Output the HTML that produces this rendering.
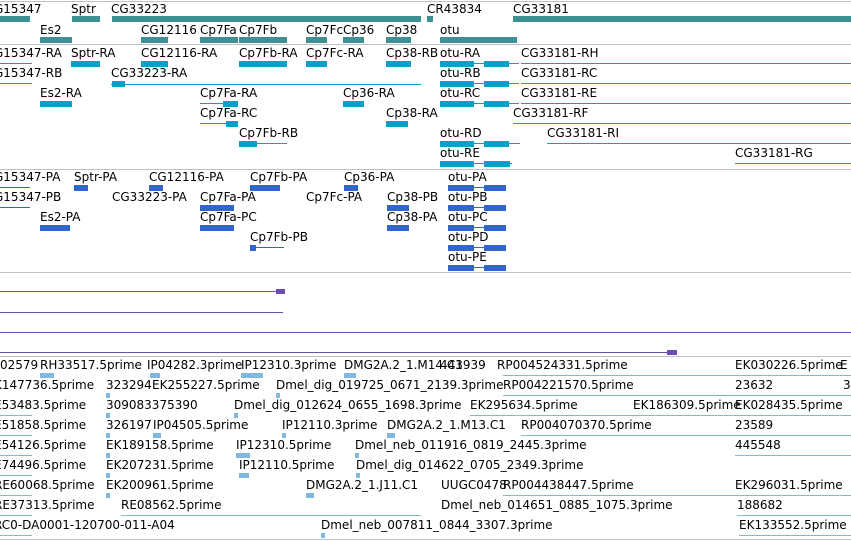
<!DOCTYPE html>
<html><head><meta charset="utf-8"><style>
body{margin:0;width:851px;height:541px;overflow:hidden;background:#fff;position:relative;font-family:"DejaVu Sans","Liberation Sans",sans-serif;font-size:12px;color:#000}
span{position:absolute;white-space:nowrap;line-height:14px}
i{position:absolute;display:block}
.s{left:0;width:851px;height:1px;background:#c0c0c0}
.g{background:#3f9093;height:6px}
.t{background:#0aa0c8;height:6px}
.tl{background:#0aa0c8;height:1px}
.p{background:#3366cc;height:6px}
.pl{background:#3366cc;height:1px}
.v{background:#6a4fb0;height:1px}
.e{background:#80b8e0;height:5px}
.el{background:#80b8e0;height:1px}
</style></head><body>
<i class="s" style="top:1px"></i><i class="s" style="top:44px"></i><i class="s" style="top:169px"></i><i class="s" style="top:272px"></i><i class="s" style="top:356px"></i><i class="s" style="top:539px"></i>

<!-- genes -->
<span style="left:-6px;top:2px">G15347</span><span style="left:71px;top:2px">Sptr</span><span style="left:111px;top:2px">CG33223</span><span style="left:427px;top:2px">CR43834</span><span style="left:513px;top:2px">CG33181</span>
<i class="g" style="left:0;top:16px;width:30px"></i><i class="g" style="left:72px;top:16px;width:28px"></i><i class="g" style="left:112px;top:16px;width:309px"></i><i class="g" style="left:427px;top:16px;width:6px"></i><i class="g" style="left:513px;top:16px;width:338px"></i>
<span style="left:40px;top:23px">Es2</span><span style="left:141px;top:23px">CG12116</span><span style="left:200px;top:23px">Cp7Fa</span><span style="left:239px;top:23px">Cp7Fb</span><span style="left:306px;top:23px">Cp7Fc</span><span style="left:343px;top:23px">Cp36</span><span style="left:386px;top:23px">Cp38</span><span style="left:440px;top:23px">otu</span>
<i class="g" style="left:40px;top:37px;width:32px"></i><i class="g" style="left:141px;top:37px;width:27px"></i><i class="g" style="left:200px;top:37px;width:38px"></i><i class="g" style="left:239px;top:37px;width:48px"></i><i class="g" style="left:306px;top:37px;width:21px"></i><i class="g" style="left:343px;top:37px;width:21px"></i><i class="g" style="left:386px;top:37px;width:25px"></i><i class="g" style="left:440px;top:37px;width:77px"></i>

<!-- transcripts -->
<span style="left:-6px;top:46px">G15347-RA</span><span style="left:71px;top:46px">Sptr-RA</span><span style="left:141px;top:46px">CG12116-RA</span><span style="left:239px;top:46px">Cp7Fb-RA</span><span style="left:306px;top:46px">Cp7Fc-RA</span><span style="left:386px;top:46px">Cp38-RB</span><span style="left:440px;top:46px">otu-RA</span><span style="left:521px;top:46px">CG33181-RH</span>
<i class="tl" style="left:0;top:63px;width:32px"></i><i class="t" style="left:71px;top:61px;width:29px"></i><i class="t" style="left:141px;top:61px;width:27px"></i><i class="t" style="left:239px;top:61px;width:48px"></i><i class="t" style="left:306px;top:61px;width:21px"></i><i class="t" style="left:386px;top:61px;width:25px"></i><i class="t" style="left:440px;top:61px;width:34px"></i><i class="tl" style="left:474px;top:63px;width:45px"></i><i class="t" style="left:484px;top:61px;width:25px"></i><i class="tl" style="left:521px;top:63px;width:330px"></i>
<span style="left:-6px;top:66px">G15347-RB</span><span style="left:111px;top:66px">CG33223-RA</span><span style="left:440px;top:66px">otu-RB</span><span style="left:521px;top:66px">CG33181-RC</span>
<i class="tl" style="left:0;top:83px;width:32px"></i><i class="tl" style="left:111px;top:84px;width:310px"></i><i class="t" style="left:112px;top:81px;width:13px"></i><i class="t" style="left:440px;top:81px;width:34px"></i><i class="tl" style="left:474px;top:83px;width:45px"></i><i class="t" style="left:484px;top:81px;width:25px"></i><i class="tl" style="left:521px;top:83px;width:330px"></i>
<span style="left:40px;top:86px">Es2-RA</span><span style="left:200px;top:86px">Cp7Fa-RA</span><span style="left:343px;top:86px">Cp36-RA</span><span style="left:440px;top:86px">otu-RC</span><span style="left:521px;top:86px">CG33181-RE</span>
<i class="t" style="left:40px;top:101px;width:32px"></i><i class="tl" style="left:200px;top:103px;width:38px"></i><i class="t" style="left:223px;top:101px;width:15px"></i><i class="t" style="left:343px;top:101px;width:21px"></i><i class="t" style="left:440px;top:101px;width:34px"></i><i class="tl" style="left:474px;top:103px;width:45px"></i><i class="t" style="left:484px;top:101px;width:25px"></i><i class="tl" style="left:521px;top:103px;width:330px"></i>
<span style="left:200px;top:106px">Cp7Fa-RC</span><span style="left:386px;top:106px">Cp38-RA</span><span style="left:513px;top:106px">CG33181-RF</span>
<i class="tl" style="left:200px;top:123px;width:38px"></i><i class="t" style="left:226px;top:121px;width:12px"></i><i class="t" style="left:386px;top:121px;width:22px"></i><i class="tl" style="left:513px;top:123px;width:338px"></i>
<span style="left:239px;top:126px">Cp7Fb-RB</span><span style="left:440px;top:126px">otu-RD</span><span style="left:547px;top:126px">CG33181-RI</span>
<i class="t" style="left:239px;top:141px;width:18px"></i><i class="tl" style="left:257px;top:143px;width:30px"></i><i class="t" style="left:440px;top:141px;width:34px"></i><i class="tl" style="left:474px;top:143px;width:46px"></i><i class="t" style="left:484px;top:141px;width:25px"></i><i class="tl" style="left:547px;top:143px;width:304px"></i>
<span style="left:440px;top:146px">otu-RE</span><span style="left:735px;top:146px">CG33181-RG</span>
<i class="t" style="left:440px;top:161px;width:34px"></i><i class="tl" style="left:474px;top:163px;width:38px"></i><i class="t" style="left:484px;top:161px;width:26px"></i><i class="tl" style="left:735px;top:163px;width:116px"></i>

<!-- proteins -->
<span style="left:-6px;top:170px">G15347-PA</span><span style="left:74px;top:170px">Sptr-PA</span><span style="left:149px;top:170px">CG12116-PA</span><span style="left:250px;top:170px">Cp7Fb-PA</span><span style="left:344px;top:170px">Cp36-PA</span><span style="left:448px;top:170px">otu-PA</span>
<i class="pl" style="left:0;top:187px;width:30px"></i><i class="p" style="left:74px;top:185px;width:14px"></i><i class="p" style="left:149px;top:185px;width:14px"></i><i class="p" style="left:250px;top:185px;width:30px"></i><i class="p" style="left:344px;top:185px;width:14px"></i><i class="p" style="left:448px;top:185px;width:26px"></i><i class="pl" style="left:474px;top:187px;width:32px"></i><i class="p" style="left:484px;top:185px;width:22px"></i>
<span style="left:-6px;top:190px">G15347-PB</span><span style="left:112px;top:190px">CG33223-PA</span><span style="left:200px;top:190px">Cp7Fa-PA</span><span style="left:306px;top:190px">Cp7Fc-PA</span><span style="left:387px;top:190px">Cp38-PB</span><span style="left:448px;top:190px">otu-PB</span>
<i class="pl" style="left:0;top:207px;width:30px"></i><i class="p" style="left:200px;top:205px;width:34px"></i><i class="p" style="left:387px;top:205px;width:22px"></i><i class="p" style="left:448px;top:205px;width:26px"></i><i class="pl" style="left:474px;top:207px;width:32px"></i><i class="p" style="left:484px;top:205px;width:22px"></i>
<span style="left:40px;top:210px">Es2-PA</span><span style="left:200px;top:210px">Cp7Fa-PC</span><span style="left:387px;top:210px">Cp38-PA</span><span style="left:448px;top:210px">otu-PC</span>
<i class="p" style="left:40px;top:225px;width:30px"></i><i class="p" style="left:200px;top:225px;width:34px"></i><i class="p" style="left:387px;top:225px;width:22px"></i><i class="p" style="left:448px;top:225px;width:26px"></i><i class="pl" style="left:474px;top:227px;width:32px"></i><i class="p" style="left:484px;top:225px;width:22px"></i>
<span style="left:250px;top:230px">Cp7Fb-PB</span><span style="left:448px;top:230px">otu-PD</span>
<i class="pl" style="left:250px;top:247px;width:34px"></i><i class="p" style="left:250px;top:245px;width:6px"></i><i class="p" style="left:448px;top:245px;width:26px"></i><i class="pl" style="left:474px;top:247px;width:32px"></i><i class="p" style="left:484px;top:245px;width:22px"></i>
<span style="left:448px;top:250px">otu-PE</span>
<i class="p" style="left:448px;top:265px;width:26px"></i><i class="pl" style="left:474px;top:267px;width:32px"></i><i class="p" style="left:484px;top:265px;width:22px"></i>

<!-- purple -->
<i class="v" style="left:0;top:291px;width:285px"></i><i class="v" style="left:276px;top:289px;width:9px;height:5px"></i>
<i class="v" style="left:0;top:312px;width:283px"></i>
<i class="v" style="left:0;top:332px;width:851px"></i>
<i class="v" style="left:0;top:352px;width:677px"></i><i class="v" style="left:667px;top:350px;width:10px;height:5px"></i>

<!-- ESTs -->
<span style="left:0;top:358px">02579</span><span style="left:40px;top:358px">RH33517.5prime</span><span style="left:147px;top:358px">IP04282.3prime</span><span style="left:241px;top:358px">IP12310.3prime</span><span style="left:344px;top:358px">DMG2A.2_1.M14.C1</span><span style="left:440px;top:358px">443939</span><span style="left:497px;top:358px">RP004524331.5prime</span><span style="left:735px;top:358px">EK030226.5prime</span><span style="left:840px;top:358px">E</span>
<i class="e" style="left:40px;top:373px;width:14px"></i><i class="e" style="left:150px;top:373px;width:10px"></i><i class="e" style="left:241px;top:373px;width:22px"></i><i class="e" style="left:344px;top:373px;width:12px"></i><i class="el" style="left:503px;top:375px;width:348px"></i>
<span style="left:-6px;top:378px">K147736.5prime</span><span style="left:106px;top:378px">323294</span><span style="left:152px;top:378px">EK255227.5prime</span><span style="left:276px;top:378px">Dmel_dig_019725_0671_2139.3prime</span><span style="left:503px;top:378px">RP004221570.5prime</span><span style="left:735px;top:378px">23632</span><span style="left:843px;top:378px">3</span>
<i class="e" style="left:106px;top:393px;width:4px"></i><i class="e" style="left:276px;top:393px;width:4px"></i><i class="el" style="left:503px;top:395px;width:348px"></i>
<span style="left:-6px;top:398px">E53483.5prime</span><span style="left:106px;top:398px">309083375390</span><span style="left:234px;top:398px">Dmel_dig_012624_0655_1698.3prime</span><span style="left:470px;top:398px">EK295634.5prime</span><span style="left:633px;top:398px">EK186309.5prime</span><span style="left:735px;top:398px">EK028435.5prime</span>
<i class="el" style="left:0;top:415px;width:32px"></i><i class="e" style="left:106px;top:413px;width:4px"></i><i class="e" style="left:234px;top:413px;width:4px"></i><i class="el" style="left:470px;top:415px;width:381px"></i>
<span style="left:-6px;top:418px">E51858.5prime</span><span style="left:106px;top:418px">326197</span><span style="left:153px;top:418px">IP04505.5prime</span><span style="left:282px;top:418px">IP12110.3prime</span><span style="left:387px;top:418px">DMG2A.2_1.M13.C1</span><span style="left:521px;top:418px">RP004070370.5prime</span><span style="left:735px;top:418px">23589</span>
<i class="el" style="left:0;top:435px;width:32px"></i><i class="e" style="left:106px;top:433px;width:4px"></i><i class="e" style="left:153px;top:433px;width:8px"></i><i class="e" style="left:282px;top:433px;width:4px"></i><i class="e" style="left:387px;top:433px;width:8px"></i><i class="el" style="left:521px;top:435px;width:330px"></i>
<span style="left:-6px;top:438px">E54126.5prime</span><span style="left:106px;top:438px">EK189158.5prime</span><span style="left:236px;top:438px">IP12310.5prime</span><span style="left:355px;top:438px">Dmel_neb_011916_0819_2445.3prime</span><span style="left:735px;top:438px">445548</span>
<i class="el" style="left:0;top:455px;width:32px"></i><i class="e" style="left:106px;top:453px;width:4px"></i><i class="e" style="left:236px;top:453px;width:14px"></i><i class="e" style="left:355px;top:453px;width:4px"></i><i class="el" style="left:735px;top:455px;width:116px"></i>
<span style="left:-6px;top:458px">E74496.5prime</span><span style="left:106px;top:458px">EK207231.5prime</span><span style="left:239px;top:458px">IP12110.5prime</span><span style="left:356px;top:458px">Dmel_dig_014622_0705_2349.3prime</span>
<i class="el" style="left:0;top:475px;width:32px"></i><i class="e" style="left:106px;top:473px;width:4px"></i><i class="e" style="left:239px;top:473px;width:10px"></i><i class="e" style="left:356px;top:473px;width:4px"></i>
<span style="left:-6px;top:478px">RE60068.5prime</span><span style="left:106px;top:478px">EK200961.5prime</span><span style="left:306px;top:478px">DMG2A.2_1.J11.C1</span><span style="left:441px;top:478px">UUGC0478</span><span style="left:503px;top:478px">RP004438447.5prime</span><span style="left:735px;top:478px">EK296031.5prime</span>
<i class="el" style="left:0;top:495px;width:32px"></i><i class="e" style="left:106px;top:493px;width:4px"></i><i class="e" style="left:306px;top:493px;width:8px"></i><i class="el" style="left:503px;top:495px;width:348px"></i>
<span style="left:-6px;top:498px">RE37313.5prime</span><span style="left:121px;top:498px">RE08562.5prime</span><span style="left:441px;top:498px">Dmel_neb_014651_0885_1075.3prime</span><span style="left:737px;top:498px">188682</span>
<i class="el" style="left:0;top:515px;width:32px"></i><i class="el" style="left:121px;top:515px;width:300px"></i><i class="el" style="left:737px;top:515px;width:114px"></i>
<span style="left:-6px;top:518px">RC0-DA0001-120700-011-A04</span><span style="left:321px;top:518px">Dmel_neb_007811_0844_3307.3prime</span><span style="left:739px;top:518px">EK133552.5prime</span>
<i class="el" style="left:0;top:535px;width:32px"></i><i class="e" style="left:321px;top:533px;width:4px"></i><i class="el" style="left:739px;top:535px;width:112px"></i>
</body></html>
